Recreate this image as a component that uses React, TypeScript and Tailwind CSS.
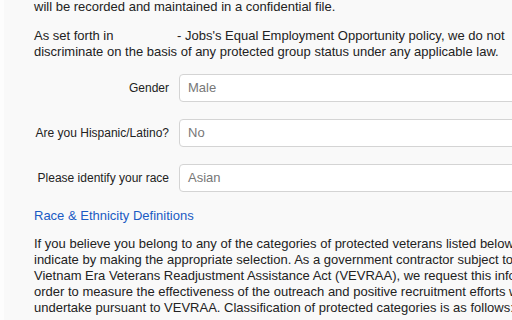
import React from 'react';

const fields = [
  { label: 'Gender', value: 'Male' },
  { label: 'Are you Hispanic/Latino?', value: 'No' },
  { label: 'Please identify your race', value: 'Asian' },
];

export default function App() {
  return (
    <div className="flex h-[320px] w-[512px] overflow-hidden bg-[#f9f9f9] text-[13px] leading-[16px] text-[#222] [font-family:'Liberation_Sans',Arial,sans-serif]">
      <div className="w-[4px] shrink-0 bg-[#fdfdfd]" />
      <div className="w-[600px] shrink-0 pl-[30px]">
        {/* Intro */}
        <p className="-mt-[1px] whitespace-nowrap">will be recorded and maintained in a confidential file.</p>
        <p className="mt-[13px] whitespace-nowrap">
          As set forth in <span className="inline-block w-[60px]" />- Jobs's Equal Employment Opportunity policy, we do not
          <br />
          discriminate on the basis of any protected group status under any applicable law.
        </p>

        {/* Fields */}
        <div className="mt-[14px] flex flex-col gap-[17px]">
          {fields.map((f) => (
            <div key={f.label} className="flex items-center">
              <label className="w-[135px] shrink-0 whitespace-nowrap text-right text-[12px]">{f.label}</label>
              <div className="ml-[10px] flex h-[28px] w-[360px] items-center rounded-[4px] border border-[#d4d4d4] bg-white pl-[8px] text-[#777]">
                {f.value}
              </div>
            </div>
          ))}
        </div>

        <a className="mt-[16px] block text-[#1a5bc4]">Race &amp; Ethnicity Definitions</a>

        <p className="mt-[12px] whitespace-nowrap">
          If you believe you belong to any of the categories of protected veterans listed below, please
          <br />
          indicate by making the appropriate selection. As a government contractor subject to the
          <br />
          Vietnam Era Veterans Readjustment Assistance Act (VEVRAA), we request this information in
          <br />
          order to measure the effectiveness of the outreach and positive recruitment efforts we
          <br />
          undertake pursuant to VEVRAA. Classification of protected categories is as follows:
        </p>
      </div>
    </div>
  );
}
